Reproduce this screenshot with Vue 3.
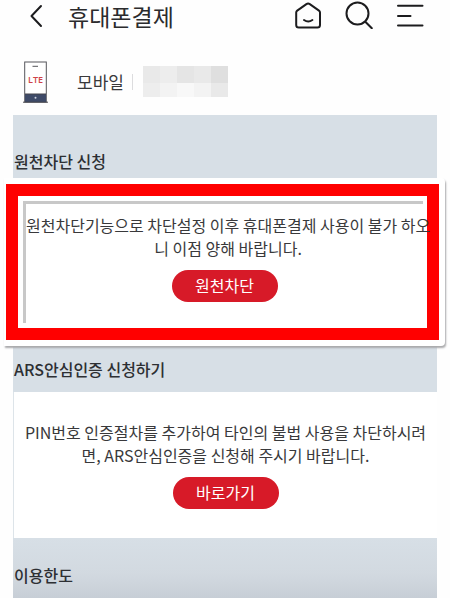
<template>
  <main class="page">
    <header class="header">
      <button class="icon-button back" aria-label="이전">
        <svg width="14" height="26" viewBox="0 0 14 26">
          <path d="M12 3 2.5 13 12 23" />
        </svg>
      </button>
      <h1 class="title">휴대폰결제</h1>
      <nav class="actions">
        <button class="icon-button" aria-label="홈">
          <svg width="28" height="28" viewBox="0 0 28 28">
            <path d="M12.4 3.1 3.2 9.6Q2.2 10.3 2.2 11.5V24Q2.2 26.6 4.8 26.6H23.4Q26 26.6 26 24V11.5Q26 10.3 25 9.6L15.8 3.1Q14.1 1.9 12.4 3.1Z" />
            <path d="M10 19Q14.2 21.8 18.4 19" />
          </svg>
        </button>
        <button class="icon-button" aria-label="검색">
          <svg width="28" height="28" viewBox="0 0 28 28">
            <circle cx="12.5" cy="12.5" r="11" />
            <path d="m20.3 20.7 6.5 6.6" />
          </svg>
        </button>
        <button class="icon-button" aria-label="메뉴">
          <svg width="28" height="28" viewBox="0 0 28 28">
            <path d="M2 4.8H26.5M2 15H14.5M2 24.6H26.5" />
          </svg>
        </button>
      </nav>
    </header>

    <div class="device">
      <svg class="phone" width="26" height="42" viewBox="0 0 26 42">
        <rect x="1.7" y="1" width="21.6" height="40" fill="#fff" stroke="#55555b" />
        <path d="M9.5 5.3H15" stroke="#55555b" />
        <rect x="2" y="33" width="21" height="8" fill="#3e4a68" />
        <path d="M0 41.2H25M2 33H23" stroke="#44444c" />
        <circle cx="12.5" cy="36.7" r="1" fill="#cfd4e0" />
        <text x="12.5" y="22" text-anchor="middle">LTE</text>
      </svg>
      <span class="device-label">모바일</span>
      <span class="divider"></span>
      <div class="mosaic">
        <i v-for="(shade, i) in shades" :key="i" :class="shade"></i>
      </div>
    </div>

    <h2 class="bar bar-tall">원천차단 신청</h2>

    <section class="highlight">
      <div class="highlight-frame">
        <div class="notice">
          <p>원천차단기능으로 차단설정 이후 휴대폰결제 사용이 불가 하오<br />니 이점 양해 바랍니다.</p>
          <button class="pill">원천차단</button>
        </div>
      </div>
    </section>

    <h2 class="bar">ARS안심인증 신청하기</h2>

    <section class="panel">
      <p>PIN번호 인증절차를 추가하여 타인의 불법 사용을 차단하시려<br />면, ARS안심인증을 신청해 주시기 바랍니다.</p>
      <button class="pill">바로가기</button>
    </section>

    <h2 class="bar bar-last">이용한도</h2>
  </main>
</template>

<script setup>
// top row first, then bottom row
const shades = ['s2', 's1', 's3', 's2', 's4', 's1', 's5', 's6', 's5', 's2'];
</script>

<style>
body {
  margin: 0;
  background: #fefefe;
}
</style>

<style scoped>
.page {
  padding: 0 13px;
  color: #39393b;
  font-family: 'Noto Sans CJK KR', sans-serif;
  font-size: 16px;
}

h1,
h2,
p {
  margin: 0;
}

button {
  padding: 0;
  border: 0;
  font-family: inherit;
  cursor: pointer;
}

.header {
  display: flex;
  align-items: center;
  height: 32px;
  padding: 0 13px 0 16px;
}

.icon-button {
  display: flex;
  background: none;
}

.icon-button svg {
  fill: none;
  stroke: #1c1c1e;
  stroke-width: 2;
  stroke-linecap: round;
  stroke-linejoin: round;
}

.title {
  margin-left: 25px;
  font-size: 23px;
  line-height: 32px;
  font-weight: 400;
  color: #2b2b2d;
}

.actions {
  display: flex;
  gap: 23px;
  margin-left: auto;
  padding-bottom: 2px;
}

.device {
  display: flex;
  box-sizing: border-box;
  align-items: center;
  height: 83px;
  padding: 16px 0 0 10px;
}

.phone text {
  fill: #cf4248;
  font-family: 'Open Sans', sans-serif;
  font-size: 9px;
  font-weight: 600;
}

.device-label {
  margin-left: 28px;
  font-size: 17px;
  line-height: 24px;
}

.divider {
  width: 1px;
  height: 16px;
  margin: 0 10px 0 8px;
  background: #dcdcde;
}

.mosaic {
  display: grid;
  grid-template-columns: repeat(5, 17px);
  grid-template-rows: 17px 14px;
}

.s1 { background: #ededed; }
.s2 { background: #e9e9e9; }
.s3 { background: #e5e5e5; }
.s4 { background: #dfdfdf; }
.s5 { background: #f3f3f3; }
.s6 { background: #f8f8f8; }

.bar {
  height: 46px;
  padding-left: 1px;
  background: #d7dfe6;
  font-size: 16px;
  line-height: 46px;
  font-weight: 500;
  color: #2d2f33;
}

.bar-tall {
  box-sizing: border-box;
  height: 63px;
  padding-top: 23px;
}

.bar-last {
  height: 60px;
  line-height: 74px;
  background: linear-gradient(#d7dfe6, #d2d9e0 60%, #c7ced6);
}

.highlight {
  position: relative;
  margin: 0 -8px 0 -9px;
  padding: 6px 6px 6px 2px;
  border-radius: 0 4px 4px 0;
  background: #fff;
  box-shadow: 1px 2px 2px #a9a9ab;
}

.highlight-frame {
  padding: 5px 4px 5px 5px;
  border: 12px solid #ff0000;
}

.notice {
  display: flex;
  flex-direction: column;
  align-items: center;
  padding: 10px 0 21px;
  border-top: 3px solid #c8c8c8;
  border-left: 3px solid #c8c8c8;
}

/* the long first line starts at the left rule */
.notice p {
  align-self: flex-start;
}

p {
  font-size: 16px;
  line-height: 23px;
  text-align: center;
  white-space: nowrap;
}

.pill {
  width: 106px;
  height: 32px;
  margin-top: 10px;
  padding-bottom: 2px;
  border-radius: 16px;
  background: #d71a28;
  color: #fff;
  font-size: 16px;
  line-height: 30px;
}

.panel {
  display: flex;
  flex-direction: column;
  align-items: center;
  padding: 29px 0;
  border-left: 1px solid #dde4e9;
  background: #fff;
}
</style>
